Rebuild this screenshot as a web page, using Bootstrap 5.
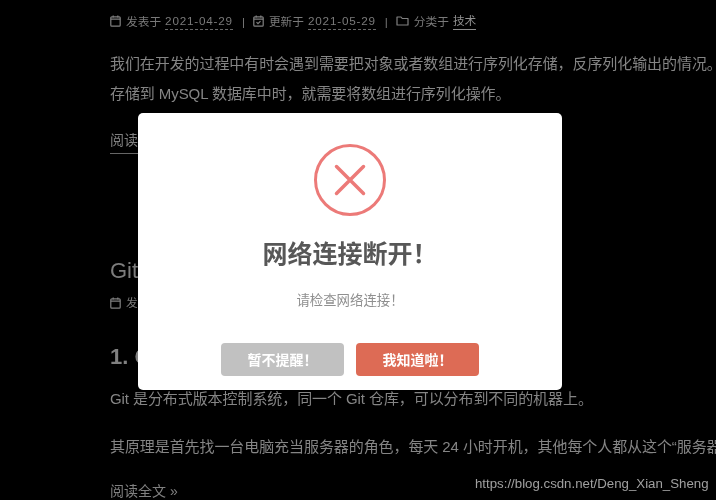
<!DOCTYPE html>
<html lang="zh">
<head>
<meta charset="utf-8">
<title>网络连接断开</title>
<link href="https://cdn.jsdelivr.net/npm/bootstrap@5.3.0/dist/css/bootstrap.min.css" rel="stylesheet">
<style>
html,body{height:500px;overflow:hidden;background:#000;}
body{font-family:"Noto Sans CJK SC","Liberation Sans",sans-serif;color:#858585;}
.page-wrap{position:relative;width:716px;height:500px;overflow:hidden;filter:blur(.35px);}
.post-col{padding:12px 0 0 110px;width:716px;white-space:nowrap;font-family:"Liberation Sans","Noto Sans CJK SC",sans-serif;}
.meta-row{font-size:11.7px;line-height:17px;color:#7a7a7a;gap:4px;}
.meta-row svg{flex:none;}
.meta-date{border-bottom:1px dashed #666;letter-spacing:.8px;}
.meta-cat{border-bottom:1px solid #8c8c8c;color:#909090;}
.meta-sep{margin:0 4px 0 5px;}
.post-text{font-size:15px;line-height:30px;margin:0;color:#858585;letter-spacing:-.08px;}
.read-more{font-size:14px;line-height:22px;color:#808080;display:inline-block;}
.read-more-line{border-bottom:1px solid #666;padding-bottom:2px;}
.post-head{font-size:22px;line-height:30px;color:#7c7c7c;margin:0;font-weight:400;}
.sub-head{font-size:22px;line-height:30px;color:#808080;font-weight:700;margin:0;}
.sweet-box{position:absolute;left:138px;top:113px;width:424px;height:277px;background:#fff;border-radius:5px;padding-top:31px;text-align:center;}
.sweet-icon{display:block;margin:0 auto;}
.sweet-title{font-size:25px;line-height:36px;font-weight:700;color:#575757;margin:16px 0 0;}
.sweet-text{font-size:13.4px;line-height:20px;color:#8f8f8f;margin:19px 0 0;}
.sweet-actions{gap:12px;margin-top:34px;padding-left:83px;}
.sweet-btn{width:123px;height:33px;padding:0;border:0;border-radius:4px;color:#fff;font-size:14px;line-height:33px;font-weight:700;}
.sweet-cancel,.sweet-cancel:hover{background:#c1c1c1;color:#fff;}
.sweet-confirm,.sweet-confirm:hover{background:#dd6b55;color:#fff;}
.mark-url{position:absolute;left:475px;top:475px;font-family:"Liberation Sans",sans-serif;font-size:13.25px;line-height:18px;color:#a0a0a0;white-space:nowrap;}
</style>
</head>
<body>
<div class="page-wrap">
  <div class="post-col">
    <div class="d-flex align-items-center meta-row">
      <svg width="12" height="12" viewBox="0 0 12 12" fill="none" stroke="#808080" stroke-width="1.2"><rect x=".8" y="1.800" width="9.400" height="9.400" rx="1"/><path d="M.8 4.200h9.400M3.200 .4v2M7.800 .4v2"/></svg>
      <span>发表于</span><span class="meta-date">2021-04-29</span>
      <span class="meta-sep">|</span>
      <svg width="12" height="12" viewBox="0 0 12 12" fill="none" stroke="#808080" stroke-width="1.2"><rect x=".8" y="1.800" width="9.400" height="9.400" rx="1"/><path d="M.8 4.200h9.400M3.200 .4v2M7.800 .4v2M3.500 7.200l1.500 1.500 2.500-2.500"/></svg>
      <span>更新于</span><span class="meta-date">2021-05-29</span>
      <span class="meta-sep">|</span>
      <svg width="14" height="12" viewBox="0 0 14 12" fill="none" stroke="#808080" stroke-width="1.2"><path d="M1 2h4l1.200 1.500H12v6.500H1z" stroke-linejoin="round"/></svg>
      <span>分类于</span><span class="meta-cat">技术</span>
    </div>
    <p class="post-text" style="margin-top:19px">我们在开发的过程中有时会遇到需要把对象或者数组进行序列化存储，反序列化输出的情况。</p>
    <p class="post-text">存储到 MySQL 数据库中时，就需要将数组进行序列化操作。</p>
    <div style="margin-top:19px"><span class="read-more read-more-line">阅读全文 »</span></div>
    <h2 class="post-head" style="margin-top:102px">Git 的基本原理</h2>
    <div class="d-flex align-items-center meta-row" style="margin-top:8px">
      <svg width="12" height="12" viewBox="0 0 12 12" fill="none" stroke="#808080" stroke-width="1.2"><rect x=".8" y="1.800" width="9.400" height="9.400" rx="1"/><path d="M.8 4.200h9.400M3.200 .4v2M7.800 .4v2"/></svg>
      <span>发表于</span>
    </div>
    <h3 class="sub-head" style="margin-top:31px">1. Git 简介</h3>
    <p class="post-text" style="margin-top:12px">Git 是分布式版本控制系统，同一个 Git 仓库，可以分布到不同的机器上。</p>
    <p class="post-text" style="margin-top:18px">其原理是首先找一台电脑充当服务器的角色，每天 24 小时开机，其他每个人都从这个“服务器”</p>
    <div style="margin-top:17px"><span class="read-more">阅读全文 »</span></div>
  </div>

  <div class="sweet-box">
    <svg class="sweet-icon" width="74" height="74" viewBox="0 0 74 74" fill="none" stroke="#ec7a78" stroke-width="3">
      <circle cx="37" cy="36" r="34.500"/>
      <path d="M23.500 22.500l27 27M50.500 22.500l-27 27" stroke-linecap="round" stroke-width="3.500"/>
    </svg>
    <h2 class="sweet-title">网络连接断开！</h2>
    <p class="sweet-text">请检查网络连接！</p>
    <div class="d-flex sweet-actions">
      <button type="button" class="btn sweet-btn sweet-cancel">暂不提醒！</button>
      <button type="button" class="btn sweet-btn sweet-confirm">我知道啦！</button>
    </div>
  </div>

  <div class="mark-url">https://blog.csdn.net/Deng_Xian_Sheng</div>
</div>
<script src="https://cdn.jsdelivr.net/npm/bootstrap@5.3.0/dist/js/bootstrap.bundle.min.js"></script>
</body>
</html>
